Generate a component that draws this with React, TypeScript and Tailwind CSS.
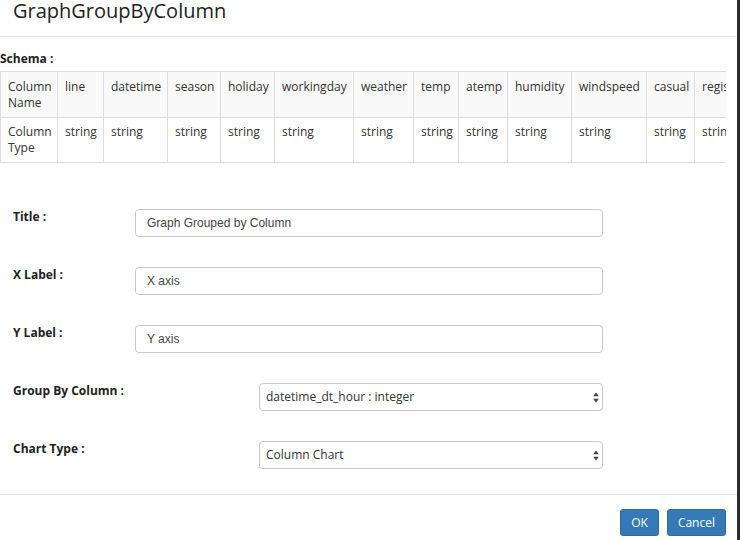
import { ReactNode } from 'react';

// first entry is the row header column width
const widths = [57, 46, 64, 53, 54, 79, 60, 45, 49, 64, 75, 48, 90];
const names = ['line', 'datetime', 'season', 'holiday', 'workingday', 'weather', 'temp', 'atemp', 'humidity', 'windspeed', 'casual', 'registered'];

function SelectArrows() {
  return (
    <svg width="6" height="11" viewBox="0 0 6 11" className="shrink-0">
      <path d="M3 0.5 L5.8 4.3 L0.2 4.3 Z" fill="#444" />
      <path d="M3 10.5 L5.8 6.7 L0.2 6.7 Z" fill="#444" />
    </svg>
  );
}

function FormRow({ label, children }: { label: string; children: ReactNode }) {
  return (
    <div className="flex items-start h-[28px]">
      <div className="w-[122px] -mt-[1px] text-[12px] leading-[17px] font-bold text-[#222]">{label}</div>
      {children}
    </div>
  );
}

function TextInput({ value }: { value: string }) {
  return (
    <div className="w-[468px] h-[28px] flex items-center px-[11px] border border-[#c8c8c8] rounded-[4px] bg-white text-[12px] text-[#444] font-['Liberation_Sans',Arial,sans-serif]">
      {value}
    </div>
  );
}

function SelectInput({ value }: { value: string }) {
  return (
    <div className="ml-[124px] w-[344px] h-[28px] flex items-center justify-between pl-[6px] pr-[3px] border border-[#c8c8c8] rounded-[4px] bg-white text-[12px] text-[#333]">
      <span>{value}</span>
      <SelectArrows />
    </div>
  );
}

export default function App() {
  return (
    <div className="flex w-[740px] h-[540px] bg-white font-['Open_Sans',sans-serif] text-[#333] overflow-hidden">
      <div className="w-[737px] flex flex-col">
        <div className="h-[37px] border-b border-[#e5e5e5] px-[13px]">
          <h1 className="text-[20px] leading-[26px] -mt-[2px] text-[#222]">GraphGroupByColumn</h1>
        </div>

        <div className="pt-[13px]">
          <div className="text-[12px] leading-[17px] font-bold text-[#222]">Schema :</div>
          <div className="mt-[4px] w-[726px] overflow-hidden">
            <table className="table-fixed border-collapse text-[12px] leading-[16px]" style={{ width: widths.reduce((a, b) => a + b, 0) }}>
              <colgroup>
                {widths.map((w, i) => (
                  <col key={i} style={{ width: w }} />
                ))}
              </colgroup>
              <tbody>
                <tr className="bg-[#f9f9f9] h-[46px]">
                  <td className="border border-[#ddd] px-[7px] pt-[7px] pb-[6px] align-top">Column Name</td>
                  {names.map((n) => (
                    <td key={n} className="border border-[#ddd] px-[7px] pt-[7px] pb-[6px] align-top whitespace-nowrap">{n}</td>
                  ))}
                  <td className="border-y border-[#ddd]" />
                </tr>
                <tr className="h-[45px]">
                  <td className="border border-[#ddd] px-[7px] pt-[6px] pb-[6px] align-top">Column Type</td>
                  {names.map((n) => (
                    <td key={n} className="border border-[#ddd] px-[7px] pt-[6px] pb-[6px] align-top whitespace-nowrap">string</td>
                  ))}
                  <td className="border-y border-[#ddd]" />
                </tr>
              </tbody>
            </table>
          </div>
        </div>

        <div className="px-[13px] pt-[46px] flex flex-col gap-[30px]">
          <FormRow label="Title :">
            <TextInput value="Graph Grouped by Column" />
          </FormRow>
          <FormRow label="X Label :">
            <TextInput value="X axis" />
          </FormRow>
          <FormRow label="Y Label :">
            <TextInput value="Y axis" />
          </FormRow>
          <FormRow label="Group By Column :">
            <SelectInput value="datetime_dt_hour : integer" />
          </FormRow>
          <FormRow label="Chart Type :">
            <SelectInput value="Column Chart" />
          </FormRow>
        </div>

        <div className="mt-[25px] border-t border-[#e5e5e5] flex justify-end gap-[8px] pr-[11px] pt-[14px]">
          <button className="h-[27px] px-[10px] rounded-[3px] bg-[#337ab7] border border-[#2e6da4] text-white text-[12px]">OK</button>
          <button className="h-[27px] px-[10px] rounded-[3px] bg-[#337ab7] border border-[#2e6da4] text-white text-[12px]">Cancel</button>
        </div>
      </div>
      <div className="w-[3px] h-full bg-[#2b2b2b]" />
    </div>
  );
}
